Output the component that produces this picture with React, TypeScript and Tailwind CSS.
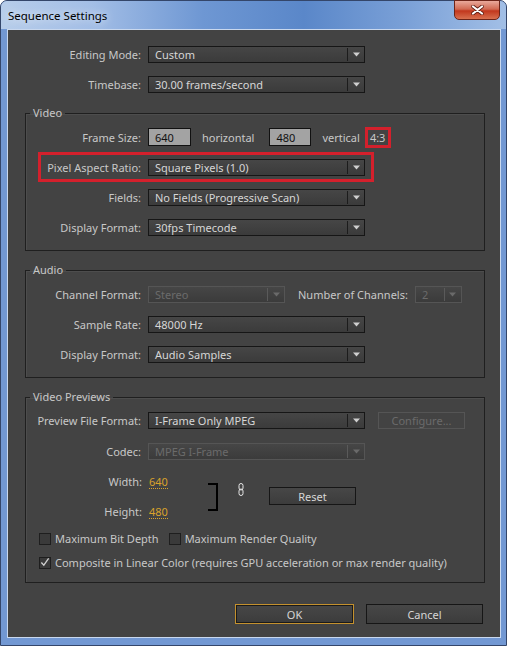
import React from 'react';

const font = "font-['Noto_Sans','Liberation_Sans',sans-serif]";

const Arrow: React.FC<{ disabled?: boolean }> = ({ disabled }) => (
  <svg width="7" height="5" viewBox="0 0 7 5">
    <path d="M0 0.5 H7 L3.5 4.5 Z" fill={disabled ? '#6a6a6a' : '#cfcfcf'} />
  </svg>
);

const Select: React.FC<{ value: string; className: string; disabled?: boolean }> = ({ value, className, disabled }) => (
  <div
    className={`flex h-[17px] items-center border bg-[linear-gradient(#464646,#3b3b3b)] ${
      disabled ? 'border-[#555555] text-[#6b6b6b]' : 'border-[#161616] text-[#d6d6d6]'
    } ${className}`}
  >
    <span className="flex-1 truncate pl-[6px] leading-[15px]">{value}</span>
    <div className={`h-[13px] w-px ${disabled ? 'bg-[#5a5a5a]' : 'bg-[#1c1c1c]'}`} />
    <div className="flex w-[16px] justify-center">
      <Arrow disabled={disabled} />
    </div>
  </div>
);

const Label: React.FC<{ text: string; className: string }> = ({ text, className }) => (
  <span className={`shrink-0 pr-[7px] text-right text-[#c8c8c8] ${className}`}>{text}</span>
);

const Checkbox: React.FC<{ label: string; checked?: boolean }> = ({ label, checked }) => (
  <div className="flex h-[17px] items-center">
    <div className="flex h-[12px] w-[12px] items-center justify-center border border-[#1e1e1e] bg-[#3a3a3a]">
      {checked && (
        <svg width="11" height="11" viewBox="0 0 11 11">
          <path d="M1.5 5.5 L4.2 8.5 L9.5 1" stroke="#d0d0d0" strokeWidth="1.4" fill="none" />
        </svg>
      )}
    </div>
    <span className="ml-[4px] text-[#c8c8c8]">{label}</span>
  </div>
);

const Group: React.FC<{ title: string; className: string; children: React.ReactNode }> = ({ title, className, children }) => (
  <fieldset className={`border border-[#1f1f1f] shadow-[inset_1px_1px_0_#4d4d4d] ${className}`}>
    <legend className="ml-[4px] px-[3px] leading-[16px] text-[#c8c8c8]">{title}</legend>
    {children}
  </fieldset>
);

export default function App() {
  return (
    <div className={`h-[647px] w-[507px] bg-white text-[11px] leading-[15px] ${font}`}>
      <div className="flex h-[646px] flex-col rounded-t-[7px] border border-[#34466a] bg-[#7298d3]">
        <div className="relative flex h-[28px] shrink-0 items-center rounded-t-[6px] bg-[linear-gradient(90deg,#b7cdea_0%,#a3bee6_18%,#6e97d3_40%,#5a87c9_60%,#7aa0d7_80%,#a2bfe6_100%)] pl-[7px]">
          <span className="text-[11.5px] text-black [text-shadow:0_0_8px_#ffffff]">Sequence Settings</span>
          <div className="absolute right-[6px] top-[-1px] flex h-[20px] w-[46px] items-center justify-center rounded-b-[5px] border border-[#6d2418] bg-[linear-gradient(#e9a99b,#d16a53_45%,#c2371d_55%,#d8704f)]">
            <svg width="13" height="10" viewBox="0 0 13 10">
              <path d="M2 1.5 L11 8.5 M11 1.5 L2 8.5" stroke="#5a1a10" strokeWidth="3.6" strokeLinecap="round" />
              <path d="M2 1.5 L11 8.5 M11 1.5 L2 8.5" stroke="#ffffff" strokeWidth="2.2" strokeLinecap="round" />
            </svg>
          </div>
        </div>

        <div className="ml-[6px] mr-[5px] flex flex-1 flex-col border border-[#c9d8ee] bg-[#434343] pl-[17px] pr-[15px] pt-[16px]">
          <div className="flex flex-col gap-[13px]">
            <div className="flex items-center">
              <Label text="Editing Mode:" className="w-[123px]" />
              <Select value="Custom" className="w-[217px]" />
            </div>
            <div className="flex items-center">
              <Label text="Timebase:" className="w-[123px]" />
              <Select value="30.00 frames/second" className="w-[217px]" />
            </div>
          </div>

          <Group title="Video" className="mt-[12px] pb-[14px] pt-[7px]">
            <div className="flex flex-col gap-[13px]">
              <div className="flex h-[18px] items-center">
                <Label text="Frame Size:" className="w-[122px]" />
                <div className="flex h-[18px] w-[43px] items-center border border-[#111] bg-[#a3a3a3] pl-[6px] text-[#111]">640</div>
                <span className="ml-[11px] text-[#c8c8c8]">horizontal</span>
                <div className="ml-[15px] flex h-[18px] w-[42px] items-center border border-[#111] bg-[#a3a3a3] pl-[6px] text-[#111]">480</div>
                <span className="ml-[11px] text-[#c8c8c8]">vertical</span>
                <span className="relative ml-[10px] text-[#c8c8c8]">
                  4:3
                  <span className="absolute left-[-5px] top-[-3px] h-[21px] w-[26px] border-[3px] border-[#d4202c]" />
                </span>
              </div>
              <div className="relative flex items-center">
                <Label text="Pixel Aspect Ratio:" className="w-[122px]" />
                <Select value="Square Pixels (1.0)" className="w-[217px]" />
                <span className="absolute left-[12px] top-[-7px] h-[30px] w-[336px] border-[3px] border-[#d4202c]" />
              </div>
              <div className="flex items-center">
                <Label text="Fields:" className="w-[122px]" />
                <Select value="No Fields (Progressive Scan)" className="w-[217px]" />
              </div>
              <div className="flex items-center">
                <Label text="Display Format:" className="w-[122px]" />
                <Select value="30fps Timecode" className="w-[217px]" />
              </div>
            </div>
          </Group>

          <Group title="Audio" className="mt-[11px] pb-[14px] pt-[8px]">
            <div className="flex flex-col gap-[13px]">
              <div className="flex items-center">
                <Label text="Channel Format:" className="w-[122px]" />
                <Select value="Stereo" className="w-[137px]" disabled />
                <span className="ml-[13px] mr-[7px] text-[#c8c8c8]">Number of Channels:</span>
                <Select value="2" className="w-[47px]" disabled />
              </div>
              <div className="flex items-center">
                <Label text="Sample Rate:" className="w-[122px]" />
                <Select value="48000 Hz" className="w-[217px]" />
              </div>
              <div className="flex items-center">
                <Label text="Display Format:" className="w-[122px]" />
                <Select value="Audio Samples" className="w-[217px]" />
              </div>
            </div>
          </Group>

          <Group title="Video Previews" className="mt-[11px] pb-[11px] pt-[7px]">
            <div className="flex flex-col gap-[14px]">
              <div className="flex items-center">
                <Label text="Preview File Format:" className="w-[122px]" />
                <Select value="I-Frame Only MPEG" className="w-[217px]" />
                <div className="ml-[13px] flex h-[17px] w-[87px] items-center justify-center border border-[#555] text-[#6b6b6b]">
                  Configure...
                </div>
              </div>
              <div className="flex items-center">
                <Label text="Codec:" className="w-[122px]" />
                <Select value="MPEG I-Frame" className="w-[217px]" disabled />
              </div>
            </div>

            <div className="mt-[13px] flex items-start">
              <div className="flex w-[182px] flex-col gap-[13px]">
                <div className="flex h-[17px] items-center">
                  <Label text="Width:" className="w-[123px]" />
                  <span className="border-b border-dotted border-[#d9a22b] leading-[13px] text-[#d9a22b]">640</span>
                </div>
                <div className="flex h-[17px] items-center">
                  <Label text="Height:" className="w-[123px]" />
                  <span className="border-b border-dotted border-[#d9a22b] leading-[13px] text-[#d9a22b]">480</span>
                </div>
              </div>
              <div className="mt-[10px] h-[28px] w-[10px] border-y-2 border-r-2 border-black" />
              <svg className="ml-[20px] mt-[10px]" width="6" height="13" viewBox="0 0 6 13">
                <rect x="1" y="0.5" width="4" height="6.5" rx="2" stroke="#e6e6e6" strokeWidth="1" fill="none" />
                <rect x="1" y="6" width="4" height="6.5" rx="2" stroke="#e6e6e6" strokeWidth="1" fill="none" />
              </svg>
              <div className="ml-[25px] mt-[14px] flex h-[18px] w-[87px] items-center justify-center border border-[#161616] bg-[linear-gradient(#474747,#3c3c3c)] text-[#d6d6d6]">
                Reset
              </div>
            </div>

            <div className="mt-[10px] flex flex-col gap-[7px] pl-[13px]">
              <div className="flex items-center gap-[10px]">
                <Checkbox label="Maximum Bit Depth" />
                <Checkbox label="Maximum Render Quality" />
              </div>
              <Checkbox label="Composite in Linear Color (requires GPU acceleration or max render quality)" checked />
            </div>
          </Group>

          <div className="mr-[2px] mt-[21px] flex justify-end gap-[12px]">
            <div className="flex h-[20px] w-[119px] items-center justify-center border border-[#c4912e] bg-[linear-gradient(#474747,#3c3c3c)] text-[#d6d6d6] shadow-[inset_0_0_0_1px_#1a1a1a]">
              OK
            </div>
            <div className="flex h-[20px] w-[117px] items-center justify-center border border-[#161616] bg-[linear-gradient(#474747,#3c3c3c)] text-[#d6d6d6]">
              Cancel
            </div>
          </div>
        </div>
        <div className="h-[7px] shrink-0" />
      </div>
    </div>
  );
}
